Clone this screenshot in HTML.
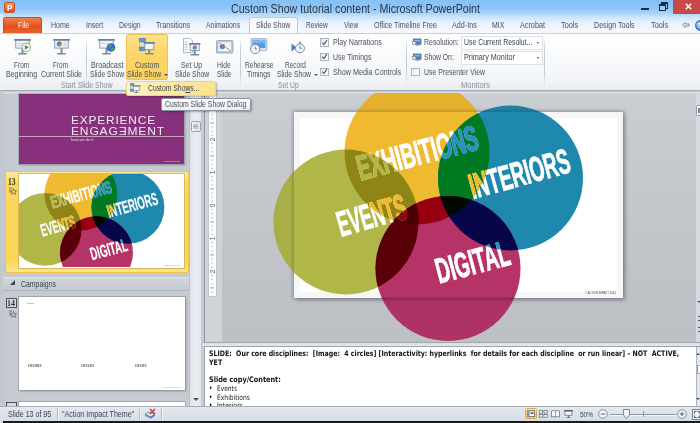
<!DOCTYPE html>
<html><head><meta charset="utf-8">
<style>
*{box-sizing:border-box;margin:0;padding:0}
html,body{width:700px;height:423px;overflow:hidden;background:#fff}
body{font-family:"Liberation Sans",sans-serif;position:relative}
#root{position:absolute;left:0;top:0;width:700px;height:423px;overflow:hidden;will-change:transform}
.a{position:absolute}
.t{position:absolute;white-space:pre;transform-origin:0 50%}
</style></head><body><div id="root">
<div class="a" style="left:0px;top:0px;width:700px;height:33px;background:linear-gradient(#84c1f7 0,#8dc6f8 8px,#a9d3f9 13px,#d3e7fb 18px,#e9f2fc 23px,#f3f7fd 30px,#f6f9fd 33px)"></div>
<div class="a" style="left:0px;top:33px;width:4.5px;height:390px;background:#e3e7ec"></div>
<div class="a" style="left:0px;top:14px;width:3px;height:20px;background:linear-gradient(#dbe9fa,#f2f6fc)"></div>
<div class="a" style="left:4px;top:2px;width:11px;height:11px;background:linear-gradient(#f59a5a,#d9531e);border-radius:2px;border:1px solid #c9501e"></div>
<div class="t" style="left:6.5px;top:2.9px;line-height:11px;font-size:9px;color:#fff;transform:scaleX(0.916);font-weight:bold;">P</div>
<div class="t" style="left:231.0px;top:0.9px;line-height:16px;font-size:12.6px;color:#2a3646;transform:scaleX(0.845);">Custom Show tutorial content - Microsoft PowerPoint</div>
<div class="a" style="left:641px;top:8px;width:8px;height:1.8px;background:#1f2c3a"></div>
<div class="a" style="left:661.3px;top:1.8px;width:7px;height:7px;border:1.3px solid #1f2c3a;border-top-width:2.2px"></div>
<div class="a" style="left:659.3px;top:3.8px;width:7px;height:7px;border:1.3px solid #1f2c3a;border-top-width:2.2px;background:#9ccaf7"></div>
<div class="a" style="left:673px;top:0px;width:27px;height:13.6px;background:#c9484a"></div>
<svg class="a" style="left:685px;top:3px" width="7" height="7" viewBox="0 0 7 7"><path d="M0.8 0.8L6.2 6.2M6.2 0.8L0.8 6.2" stroke="#fff" stroke-width="1.5"/></svg>
<svg class="a" style="left:681.5px;top:22px" width="8" height="6" viewBox="0 0 8 6"><path d="M3 0.6L0.6 3L3 5.4V4H7V2H3Z" fill="#f4f6f9" stroke="#5b6676" stroke-width="0.7"/></svg>
<div class="a" style="left:694.5px;top:19.5px;width:11px;height:11px;border-radius:50%;background:radial-gradient(circle at 35% 30%,#8fc0f5,#2f6fd0);border:1px solid #2a5fb5"></div>
<div class="t" style="left:697.3px;top:20.8px;line-height:10px;font-size:8px;color:#fff;transform:scaleX(0.757);font-weight:bold;">?</div>
<div class="a" style="left:3px;top:17px;width:39px;height:16px;background:linear-gradient(#f0834a,#e5501c 55%,#e9602a);border-radius:3px 3px 0 0;border:1px solid #cf4a1c;border-bottom:none"></div>
<div class="t" style="left:17.5px;top:21.3px;line-height:10px;font-size:8.2px;color:#fff;transform:scaleX(0.832);">File</div>
<div class="a" style="left:249px;top:17px;width:49px;height:17px;background:linear-gradient(#f4f8fd,#fafcfe);border:1px solid #b9c9dc;border-bottom:none;border-radius:3px 3px 0 0"></div>
<div class="t" style="left:51.3px;top:21.1px;line-height:10px;font-size:8.2px;color:#475060;transform:scaleX(0.855);">Home</div>
<div class="t" style="left:85.8px;top:21.1px;line-height:10px;font-size:8.2px;color:#475060;transform:scaleX(0.839);">Insert</div>
<div class="t" style="left:118.8px;top:21.1px;line-height:10px;font-size:8.2px;color:#475060;transform:scaleX(0.850);">Design</div>
<div class="t" style="left:155.8px;top:21.1px;line-height:10px;font-size:8.2px;color:#475060;transform:scaleX(0.859);">Transitions</div>
<div class="t" style="left:206.3px;top:21.1px;line-height:10px;font-size:8.2px;color:#475060;transform:scaleX(0.843);">Animations</div>
<div class="t" style="left:256.3px;top:21.1px;line-height:10px;font-size:8.2px;color:#475060;transform:scaleX(0.834);">Slide Show</div>
<div class="t" style="left:306.3px;top:21.1px;line-height:10px;font-size:8.2px;color:#475060;transform:scaleX(0.807);">Review</div>
<div class="t" style="left:343.8px;top:21.1px;line-height:10px;font-size:8.2px;color:#475060;transform:scaleX(0.806);">View</div>
<div class="t" style="left:373.8px;top:21.1px;line-height:10px;font-size:8.2px;color:#475060;transform:scaleX(0.860);">Office Timeline Free</div>
<div class="t" style="left:452.0px;top:21.1px;line-height:10px;font-size:8.2px;color:#475060;transform:scaleX(0.878);">Add-Ins</div>
<div class="t" style="left:492.0px;top:21.1px;line-height:10px;font-size:8.2px;color:#475060;transform:scaleX(0.857);">MIX</div>
<div class="t" style="left:520.0px;top:21.1px;line-height:10px;font-size:8.2px;color:#475060;transform:scaleX(0.885);">Acrobat</div>
<div class="t" style="left:560.8px;top:21.1px;line-height:10px;font-size:8.2px;color:#475060;transform:scaleX(0.898);">Tools</div>
<div class="t" style="left:593.8px;top:21.1px;line-height:10px;font-size:8.2px;color:#475060;transform:scaleX(0.870);">Design Tools</div>
<div class="t" style="left:650.8px;top:21.1px;line-height:10px;font-size:8.2px;color:#475060;transform:scaleX(0.898);">Tools</div>
<div class="a" style="left:0px;top:33px;width:700px;height:58px;background:linear-gradient(#ffffff,#f8f9fb 50%,#f1f3f6 85%,#eaedf1);border-top:1px solid #c5d0de;border-bottom:1px solid #a7acb4"></div>
<div class="a" style="left:85.5px;top:37px;width:1px;height:50px;background:linear-gradient(rgba(190,200,212,0),#c3ccd8 30%,#c3ccd8 70%,rgba(190,200,212,0))"></div>
<div class="a" style="left:239.5px;top:37px;width:1px;height:50px;background:linear-gradient(rgba(190,200,212,0),#c3ccd8 30%,#c3ccd8 70%,rgba(190,200,212,0))"></div>
<div class="a" style="left:406px;top:37px;width:1px;height:50px;background:linear-gradient(rgba(190,200,212,0),#c3ccd8 30%,#c3ccd8 70%,rgba(190,200,212,0))"></div>
<div class="a" style="left:543.5px;top:37px;width:1px;height:50px;background:linear-gradient(rgba(190,200,212,0),#c3ccd8 30%,#c3ccd8 70%,rgba(190,200,212,0))"></div>
<div class="a" style="left:126px;top:34px;width:42px;height:46px;background:linear-gradient(#fce08a,#fbd668 45%,#fad25e);border:1px solid #eec257;border-radius:2px"></div>
<div class="t" style="left:14.3px;top:60.8px;line-height:10px;font-size:8.2px;color:#4a505c;transform:scaleX(0.794);">From</div>
<div class="t" style="left:6.3px;top:70.3px;line-height:10px;font-size:8.2px;color:#4a505c;transform:scaleX(0.855);">Beginning</div>
<div class="t" style="left:53.0px;top:60.8px;line-height:10px;font-size:8.2px;color:#4a505c;transform:scaleX(0.784);">From</div>
<div class="t" style="left:41.0px;top:70.3px;line-height:10px;font-size:8.2px;color:#4a505c;transform:scaleX(0.857);">Current Slide</div>
<div class="t" style="left:90.5px;top:60.8px;line-height:10px;font-size:8.2px;color:#4a505c;transform:scaleX(0.880);">Broadcast</div>
<div class="t" style="left:89.5px;top:70.3px;line-height:10px;font-size:8.2px;color:#4a505c;transform:scaleX(0.836);">Slide Show</div>
<div class="t" style="left:134.5px;top:60.8px;line-height:10px;font-size:8.2px;color:#4a505c;transform:scaleX(0.860);">Custom</div>
<div class="t" style="left:127.0px;top:70.3px;line-height:10px;font-size:8.2px;color:#4a505c;transform:scaleX(0.836);">Slide Show</div>
<div class="a" style="left:163.5px;top:74px;border:2px solid transparent;border-top:2.5px solid #4a5260;width:0;height:0"></div>
<div class="t" style="left:181.0px;top:60.8px;line-height:10px;font-size:8.2px;color:#4a505c;transform:scaleX(0.838);">Set Up</div>
<div class="t" style="left:174.5px;top:70.3px;line-height:10px;font-size:8.2px;color:#4a505c;transform:scaleX(0.836);">Slide Show</div>
<div class="t" style="left:217.0px;top:60.8px;line-height:10px;font-size:8.2px;color:#4a505c;transform:scaleX(0.818);">Hide</div>
<div class="t" style="left:216.5px;top:70.3px;line-height:10px;font-size:8.2px;color:#4a505c;transform:scaleX(0.795);">Slide</div>
<div class="t" style="left:244.5px;top:60.8px;line-height:10px;font-size:8.2px;color:#4a505c;transform:scaleX(0.802);">Rehearse</div>
<div class="t" style="left:247.0px;top:70.3px;line-height:10px;font-size:8.2px;color:#4a505c;transform:scaleX(0.827);">Timings</div>
<div class="t" style="left:285.0px;top:60.8px;line-height:10px;font-size:8.2px;color:#4a505c;transform:scaleX(0.794);">Record</div>
<div class="t" style="left:277.0px;top:70.3px;line-height:10px;font-size:8.2px;color:#4a505c;transform:scaleX(0.829);">Slide Show</div>
<div class="a" style="left:313.5px;top:74px;border:2px solid transparent;border-top:2.5px solid #4a5260;width:0;height:0"></div>
<svg class="a" style="left:13.7px;top:39.2px" width="18" height="17" viewBox="0 0 18 17"><rect x="0" y="0" width="17" height="1.8" rx="0.6" fill="#6f7f93"/><rect x="1.75" y="1.6" width="13.5" height="7.5" fill="#f2f5f9" stroke="#8393a8" stroke-width="0.9"/><rect x="7.5" y="9.1" width="2" height="5" fill="#7c8a9c"/><rect x="4.0" y="13.9" width="9" height="1.6" rx="0.7" fill="#7c8a9c"/><line x1="3.5" y1="4.5" x2="10" y2="4.5" stroke="#b8c2cf" stroke-width="0.7"/><line x1="3.5" y1="6.5" x2="9" y2="6.5" stroke="#b8c2cf" stroke-width="0.7"/><circle cx="12.3" cy="8.3" r="4.1" fill="#f4f8f2" stroke="#8a968a" stroke-width="0.8"/><path d="M10.9 5.9L15 8.3L10.9 10.7Z" fill="#3ea33a"/></svg>
<svg class="a" style="left:52.5px;top:39.2px" width="18" height="17" viewBox="0 0 18 17"><rect x="0" y="0" width="17" height="1.8" rx="0.6" fill="#6f7f93"/><rect x="1.75" y="1.6" width="13.5" height="7.5" fill="#f2f5f9" stroke="#8393a8" stroke-width="0.9"/><rect x="7.5" y="9.1" width="2" height="5" fill="#7c8a9c"/><rect x="4.0" y="13.9" width="9" height="1.6" rx="0.7" fill="#7c8a9c"/><circle cx="6.2" cy="5" r="2.5" fill="#4d86d0"/><path d="M6.2 5L6.2 2.5A2.5 2.5 0 0 1 8.7 5Z" fill="#d9534a"/><path d="M6.2 5L8.7 5A2.5 2.5 0 0 1 6.2 7.5Z" fill="#7fb548"/><line x1="10.3" y1="3.8" x2="13.3" y2="3.8" stroke="#b8c2cf" stroke-width="0.7"/><line x1="10.3" y1="5.4" x2="13.3" y2="5.4" stroke="#b8c2cf" stroke-width="0.7"/><line x1="10.3" y1="7" x2="13.3" y2="7" stroke="#b8c2cf" stroke-width="0.7"/></svg>
<svg class="a" style="left:98.3px;top:39.2px" width="19" height="17" viewBox="0 0 19 17"><rect x="0" y="0" width="17" height="1.8" rx="0.6" fill="#6f7f93"/><rect x="1.75" y="1.6" width="13.5" height="7.5" fill="#f2f5f9" stroke="#8393a8" stroke-width="0.9"/><rect x="7.5" y="9.1" width="2" height="5" fill="#7c8a9c"/><rect x="4.0" y="13.9" width="9" height="1.6" rx="0.7" fill="#7c8a9c"/><line x1="3.5" y1="4.5" x2="10" y2="4.5" stroke="#b8c2cf" stroke-width="0.7"/><circle cx="13" cy="8.4" r="4" fill="#2f6fc4" stroke="#2a5da6" stroke-width="0.5"/><path d="M10.5 6.5Q12 5 13.5 5.6Q14 7 12.6 7.6Q12 9 11 8.5Z" fill="#4fae3e"/><path d="M13.5 9Q15 8.3 16 9.5Q15.4 11.6 13.8 11.8Q13 10.5 13.5 9Z" fill="#4fae3e"/></svg>
<svg class="a" style="left:138.5px;top:38.3px" width="17" height="17" viewBox="0 0 17 17"><rect x="0.3" y="0.3" width="6" height="3.3" fill="#5d9be0" stroke="#3c73b8" stroke-width="0.6"/><rect x="0.3" y="4.8" width="6" height="3.3" fill="#dfe9f6" stroke="#8aa4c8" stroke-width="0.6"/><rect x="0.3" y="9.3" width="6" height="3.3" fill="#5d9be0" stroke="#3c73b8" stroke-width="0.6"/><g transform="translate(4.5,4)"><rect x="0" y="0" width="11.5" height="1.8" rx="0.6" fill="#6f7f93"/><rect x="1.25" y="1.6" width="9" height="6" fill="#f2f5f9" stroke="#8393a8" stroke-width="0.9"/><rect x="4.75" y="7.6" width="2" height="3.5" fill="#7c8a9c"/><rect x="1.25" y="10.9" width="9" height="1.6" rx="0.7" fill="#7c8a9c"/></g></svg>
<svg class="a" style="left:183px;top:38px" width="18" height="17.5" viewBox="0 0 18 17.5"><path d="M0.5 0.5H7L9.5 3V14.5H0.5Z" fill="#fbfcfe" stroke="#9aa6b6" stroke-width="0.8"/><g stroke="#8b98ab" stroke-width="0.7"><line x1="2" y1="4" x2="4.5" y2="4"/><line x1="2" y1="6.5" x2="4.5" y2="6.5"/><line x1="2" y1="9" x2="4.5" y2="9"/><line x1="2" y1="11.5" x2="4.5" y2="11.5"/></g><g transform="translate(6,5)"><rect x="0" y="0" width="11.5" height="1.8" rx="0.6" fill="#6f7f93"/><rect x="1.25" y="1.6" width="9" height="6" fill="#f2f5f9" stroke="#8393a8" stroke-width="0.9"/><rect x="4.75" y="7.6" width="2" height="3.5" fill="#7c8a9c"/><rect x="1.25" y="10.9" width="9" height="1.6" rx="0.7" fill="#7c8a9c"/><circle cx="5.8" cy="4.6" r="2.1" fill="#4d86d0"/><path d="M5.8 4.6V2.5A2.1 2.1 0 0 1 7.9 4.6Z" fill="#d9534a"/><path d="M5.8 4.6H7.9A2.1 2.1 0 0 1 5.8 6.7Z" fill="#7fb548"/></g></svg>
<svg class="a" style="left:215.5px;top:40px" width="18" height="14" viewBox="0 0 18 14"><rect x="0.5" y="0.5" width="16.5" height="12.5" rx="1" fill="#c9d0da" stroke="#8f9aaa" stroke-width="0.8"/><rect x="2" y="2" width="13.5" height="9.5" fill="#f1f4f8" stroke="#a7b1bf" stroke-width="0.5"/><circle cx="6.3" cy="6.5" r="2.6" fill="#4d86d0"/><path d="M6.3 6.5V3.9A2.6 2.6 0 0 1 8.9 6.5Z" fill="#d9534a"/><path d="M2.5 2.5L15 11" stroke="#8893a3" stroke-width="0.9"/></svg>
<svg class="a" style="left:250px;top:38.3px" width="18" height="17" viewBox="0 0 18 17"><rect x="1" y="0.4" width="15.8" height="12.3" rx="1" fill="#dfe6ef" stroke="#98a5b6" stroke-width="0.8"/><rect x="2.4" y="1.8" width="13" height="8.3" fill="#4f9be6"/><rect x="2.4" y="1.8" width="13" height="3.5" fill="#78b6f0"/><circle cx="5.2" cy="11" r="4.6" fill="#f6f8fa" stroke="#7f8b9b" stroke-width="1"/><rect x="4.4" y="4.9" width="1.6" height="1.6" fill="#7f8b9b"/><path d="M5.2 8.5V11H7.3" stroke="#5d6878" stroke-width="0.8" fill="none"/></svg>
<svg class="a" style="left:290.5px;top:40.5px" width="15" height="14" viewBox="0 0 15 14"><path d="M0.5 2.5L5.5 6.5L0.5 10.5Z" fill="#3f7fd6"/><circle cx="8.9" cy="7.3" r="4.5" fill="#f6f8fa" stroke="#7f8b9b" stroke-width="1"/><rect x="8" y="0.6" width="1.8" height="2" fill="#7f8b9b"/><path d="M8.9 4.8V7.3H11" stroke="#5d6878" stroke-width="0.8" fill="none"/></svg>
<div class="t" style="left:61.0px;top:81.3px;line-height:10px;font-size:8.2px;color:#868d99;transform:scaleX(0.850);">Start Slide Show</div>
<div class="t" style="left:278.0px;top:81.3px;line-height:10px;font-size:8.2px;color:#868d99;transform:scaleX(0.830);">Set Up</div>
<div class="t" style="left:461.0px;top:81.3px;line-height:10px;font-size:8.2px;color:#868d99;transform:scaleX(0.922);">Monitors</div>
<div class="a" style="left:320px;top:38.2px;width:8.6px;height:8.6px;background:linear-gradient(135deg,#dfe4ea,#fbfcfd 60%);border:1px solid #adb5c0"></div>
<svg class="a" style="left:321px;top:38.9px" width="7" height="7" viewBox="0 0 7 7"><path d="M1.2 3.6L2.9 5.6L5.9 1.2" stroke="#525c6a" stroke-width="1.2" fill="none"/></svg>
<div class="a" style="left:320px;top:52.7px;width:8.6px;height:8.6px;background:linear-gradient(135deg,#dfe4ea,#fbfcfd 60%);border:1px solid #adb5c0"></div>
<svg class="a" style="left:321px;top:53.4px" width="7" height="7" viewBox="0 0 7 7"><path d="M1.2 3.6L2.9 5.6L5.9 1.2" stroke="#525c6a" stroke-width="1.2" fill="none"/></svg>
<div class="a" style="left:320px;top:67.7px;width:8.6px;height:8.6px;background:linear-gradient(135deg,#dfe4ea,#fbfcfd 60%);border:1px solid #adb5c0"></div>
<svg class="a" style="left:321px;top:68.4px" width="7" height="7" viewBox="0 0 7 7"><path d="M1.2 3.6L2.9 5.6L5.9 1.2" stroke="#525c6a" stroke-width="1.2" fill="none"/></svg>
<div class="a" style="left:411px;top:67.7px;width:8.6px;height:8.6px;background:linear-gradient(135deg,#dfe4ea,#fbfcfd 60%);border:1px solid #adb5c0"></div>
<div class="t" style="left:332.5px;top:38.3px;line-height:10px;font-size:8.2px;color:#4a505c;transform:scaleX(0.871);">Play Narrations</div>
<div class="t" style="left:332.5px;top:52.8px;line-height:10px;font-size:8.2px;color:#4a505c;transform:scaleX(0.853);">Use Timings</div>
<div class="t" style="left:332.5px;top:67.8px;line-height:10px;font-size:8.2px;color:#4a505c;transform:scaleX(0.876);">Show Media Controls</div>
<div class="t" style="left:424.0px;top:38.3px;line-height:10px;font-size:8.2px;color:#4a505c;transform:scaleX(0.848);">Resolution:</div>
<div class="t" style="left:424.0px;top:52.8px;line-height:10px;font-size:8.2px;color:#4a505c;transform:scaleX(0.828);">Show On:</div>
<div class="t" style="left:423.8px;top:67.8px;line-height:10px;font-size:8.2px;color:#4a505c;transform:scaleX(0.846);">Use Presenter View</div>
<div class="a" style="left:461px;top:35.5px;width:81.5px;height:14px;background:#fff;border:1px solid #dde2e9"></div>
<div class="t" style="left:464.0px;top:38.3px;line-height:10px;font-size:8.2px;color:#3a4150;transform:scaleX(0.844);">Use Current Resolut...</div>
<div class="a" style="left:536.8px;top:41.8px;border:1.7px solid transparent;border-top:2.2px solid #4a5260;width:0;height:0"></div>
<div class="a" style="left:461px;top:50.5px;width:81.5px;height:14px;background:#fff;border:1px solid #dde2e9"></div>
<div class="t" style="left:464.0px;top:53.3px;line-height:10px;font-size:8.2px;color:#3a4150;transform:scaleX(0.881);">Primary Monitor</div>
<div class="a" style="left:536.8px;top:56.8px;border:1.7px solid transparent;border-top:2.2px solid #4a5260;width:0;height:0"></div>
<svg class="a" style="left:411.5px;top:38.3px" width="10" height="9" viewBox="0 0 10 9"><rect x="1.5" y="1" width="7.5" height="5.2" fill="#4d82c8" stroke="#56657a" stroke-width="0.8"/><rect x="2.3" y="1.8" width="6" height="1.6" fill="#86b2e6"/><rect x="0.3" y="3.6" width="3.4" height="3" fill="#e8edf4" stroke="#6b788a" stroke-width="0.5"/><rect x="3.5" y="6.8" width="4" height="0.9" fill="#8a94a2"/></svg>
<svg class="a" style="left:411.5px;top:52.8px" width="10" height="9" viewBox="0 0 10 9"><rect x="1.5" y="1" width="7.5" height="5.2" fill="#4d82c8" stroke="#56657a" stroke-width="0.8"/><rect x="2.3" y="1.8" width="6" height="1.6" fill="#86b2e6"/><rect x="0.3" y="3.6" width="3.4" height="3" fill="#e8edf4" stroke="#6b788a" stroke-width="0.5"/><rect x="3.5" y="6.8" width="4" height="0.9" fill="#8a94a2"/></svg>
<div class="a" style="left:0px;top:91px;width:700px;height:315px;background:#c3c8ce"></div>
<div class="a" style="left:4.5px;top:92px;width:185px;height:314px;background:#c6cbd2"></div>
<div class="a" style="left:3px;top:92px;width:200px;height:2px;background:linear-gradient(#dfe4ea,#c9cfd6)"></div>
<div class="a" style="left:19px;top:93.5px;width:165px;height:70.5px;background:#87307b;box-shadow:0 0 0 1px rgba(160,165,172,.8),1px 1px 2px rgba(60,60,70,.5)"></div>
<div class="a" style="left:19px;top:135.5px;width:165px;height:1px;background:#c9a3c4"></div>
<div class="t" style="left:70.6px;top:112.8px;line-height:14px;font-size:11.5px;color:#f3e6f1;transform:scaleX(1.034);letter-spacing:0.8px;">EXPERIENCE</div>
<div class="t" style="left:70.6px;top:123.8px;line-height:14px;font-size:11.5px;color:#f3e6f1;transform:scaleX(1.046);letter-spacing:0.8px;">ENGAGƎMENT</div>
<div class="t" style="left:70.6px;top:137.9px;line-height:4px;font-size:3.6px;color:#e9d6e6;transform:scaleX(1.119);">how we do it</div>
<div class="t" style="left:163.0px;top:159.7px;line-height:2px;font-size:2px;color:#e9d6e6;transform:scaleX(1.095);">ACTION IMPACT</div>
<div class="a" style="left:4.5px;top:170.5px;width:184.5px;height:102.5px;background:linear-gradient(#fdeaa0,#fbd95f 12%,#fad557 88%,#fce38a);border:1px solid #eec24a;border-radius:2px"></div>
<div class="a" style="left:18.5px;top:174px;width:165.5px;height:93.5px;background:#fff;box-shadow:0 0 0 1px rgba(200,170,80,.7)"></div>
<svg class="a" style="left:18.5px;top:174px;overflow:hidden" width="165.5" height="93.1" viewBox="0 0 329 185"><defs><clipPath id="cY"><circle cx="123" cy="40" r="72.5"/></clipPath><clipPath id="cO"><circle cx="52" cy="110" r="72.5"/></clipPath><clipPath id="cB"><circle cx="216.5" cy="66" r="72.5"/></clipPath><clipPath id="cM"><circle cx="154" cy="156.5" r="72.5"/></clipPath></defs><circle cx="52" cy="110" r="72.5" fill="#b1b649"/><circle cx="123" cy="40" r="72.5" fill="#f0ba30"/><circle cx="216.5" cy="66" r="72.5" fill="#1e88ad"/><circle cx="154" cy="156.5" r="72.5" fill="#b63367"/><circle cx="52" cy="110" r="72.5" fill="#8f8416" clip-path="url(#cY)"/><circle cx="216.5" cy="66" r="72.5" fill="#007a22" clip-path="url(#cY)"/><circle cx="154" cy="156.5" r="72.5" fill="#960010" clip-path="url(#cY)"/><circle cx="154" cy="156.5" r="72.5" fill="#5a0008" clip-path="url(#cO)"/><circle cx="154" cy="156.5" r="72.5" fill="#08064a" clip-path="url(#cB)"/><g clip-path="url(#cO)"><circle cx="154" cy="156.5" r="72.5" fill="#4a0004" clip-path="url(#cY)"/></g><g clip-path="url(#cB)"><circle cx="154" cy="156.5" r="72.5" fill="#000800" clip-path="url(#cY)"/></g><g font-size="33.5" font-weight="bold" font-family="'Liberation Sans',sans-serif"><text font-size="35" transform="translate(66.5,68.5) rotate(-14.85)" textLength="124" lengthAdjust="spacingAndGlyphs" fill="#fff" stroke="#fff" stroke-width="0.2" vector-effect="non-scaling-stroke">EXHIBITIONS</text><g clip-path="url(#cO)"><text font-size="35" transform="translate(66.5,68.5) rotate(-14.85)" textLength="124" lengthAdjust="spacingAndGlyphs" fill="#b1b649" stroke="#b1b649" stroke-width="0.5" vector-effect="non-scaling-stroke">EXHIBITIONS</text></g><g clip-path="url(#cB)"><text font-size="35" transform="translate(66.5,68.5) rotate(-14.85)" textLength="124" lengthAdjust="spacingAndGlyphs" fill="#2a90c0" stroke="#2a90c0" stroke-width="0.5" vector-effect="non-scaling-stroke">EXHIBITIONS</text></g><text font-size="35" transform="translate(179,87) rotate(-15.4)" textLength="103" lengthAdjust="spacingAndGlyphs" fill="#fff" stroke="#fff" stroke-width="0.2" vector-effect="non-scaling-stroke">INTERIORS</text><g clip-path="url(#cY)"><text font-size="35" transform="translate(179,87) rotate(-15.4)" textLength="103" lengthAdjust="spacingAndGlyphs" fill="#f0ba30" stroke="#f0ba30" stroke-width="0.5" vector-effect="non-scaling-stroke">INTERIORS</text></g><text font-size="35.5" transform="translate(46.9,124.7) rotate(-15.8)" textLength="70.5" lengthAdjust="spacingAndGlyphs" fill="#fff" stroke="#fff" stroke-width="0.2" vector-effect="non-scaling-stroke">EVENTS</text><g clip-path="url(#cY)"><text font-size="35.5" transform="translate(46.9,124.7) rotate(-15.8)" textLength="70.5" lengthAdjust="spacingAndGlyphs" fill="#f0ba30" stroke="#f0ba30" stroke-width="0.5" vector-effect="non-scaling-stroke">EVENTS</text></g><g clip-path="url(#cM)"><text font-size="35.5" transform="translate(46.9,124.7) rotate(-15.8)" textLength="70.5" lengthAdjust="spacingAndGlyphs" fill="#b63367" stroke="#b63367" stroke-width="0.5" vector-effect="non-scaling-stroke">EVENTS</text></g><g clip-path="url(#cM)"><g clip-path="url(#cY)"><text font-size="35.5" transform="translate(46.9,124.7) rotate(-15.8)" textLength="70.5" lengthAdjust="spacingAndGlyphs" fill="#960010" stroke="#960010" stroke-width="0.5" vector-effect="non-scaling-stroke">EVENTS</text></g></g><text font-size="35.5" transform="translate(145.3,171.6) rotate(-14.9)" textLength="75.2" lengthAdjust="spacingAndGlyphs" fill="#fff" stroke="#fff" stroke-width="0.2" vector-effect="non-scaling-stroke">DIGITAL</text><g clip-path="url(#cB)"><text font-size="35.5" transform="translate(145.3,171.6) rotate(-14.9)" textLength="75.2" lengthAdjust="spacingAndGlyphs" fill="#2a90c0" stroke="#2a90c0" stroke-width="0.5" vector-effect="non-scaling-stroke">DIGITAL</text></g></g></svg>
<div class="t" style="left:7.6px;top:175.6px;line-height:12px;font-size:9.5px;color:#3a3222;transform:scaleX(0.800);font-weight:bold;font-family:'Liberation Serif',serif;">13</div>
<svg class="a" style="left:7.5px;top:187px" width="9" height="8" viewBox="0 0 9 8"><path d="M1 1H4M1 3H3M1 5H3" stroke="#5a5340" stroke-width="0.7"/><path d="M5.5 1.5L6.3 3.6L8.5 3.8L6.9 5.2L7.4 7.4L5.5 6.2L3.6 7.4L4.1 5.2L2.8 3.8L4.7 3.6Z" fill="none" stroke="#5a5340" stroke-width="0.7"/></svg>
<div class="t" style="left:163.0px;top:263.7px;line-height:2px;font-size:2px;color:#888;transform:scaleX(1.095);">ACTION IMPACT</div>
<div class="a" style="left:3px;top:276.5px;width:186px;height:14px;background:linear-gradient(#d2d7dd,#c4cad1);border-top:1px solid #dde1e6;border-bottom:1px solid #aeb5be"></div>
<div class="a" style="left:10px;top:280px;width:0;height:0;border-left:5.5px solid transparent;border-bottom:5.5px solid #3f4651"></div>
<div class="t" style="left:21.0px;top:279.5px;line-height:10px;font-size:8.2px;color:#3b4452;transform:scaleX(0.844);">Campaigns</div>
<div class="a" style="left:18.5px;top:296.5px;width:166px;height:93.5px;background:#fff;box-shadow:0 0 0 1px rgba(150,156,165,.8),1px 1px 2px rgba(60,60,70,.5)"></div>
<div class="a" style="left:5.5px;top:298px;width:11px;height:9.5px;border:1px solid #4a4f58;background:#d6dae0"></div>
<div class="t" style="left:7.0px;top:298.2px;line-height:11px;font-size:8.5px;color:#2d3038;transform:scaleX(0.941);font-weight:bold;font-family:'Liberation Serif',serif;">14</div>
<svg class="a" style="left:7.5px;top:309.5px" width="9" height="8" viewBox="0 0 9 8"><path d="M1 1H4M1 3H3M1 5H3" stroke="#4f5560" stroke-width="0.7"/><path d="M5.5 1.5L6.3 3.6L8.5 3.8L6.9 5.2L7.4 7.4L5.5 6.2L3.6 7.4L4.1 5.2L2.8 3.8L4.7 3.6Z" fill="none" stroke="#4f5560" stroke-width="0.7"/></svg>
<div class="a" style="left:27px;top:303px;width:7px;height:1px;background:#c9cf7a"></div>
<div class="a" style="left:27.6px;top:363.8px;width:14.4px;height:3.3px;background:repeating-linear-gradient(90deg,#a3a3a3 0 1px,#dcdcdc 1px 1.7px)"></div>
<div class="a" style="left:81px;top:363.8px;width:13px;height:3.3px;background:repeating-linear-gradient(90deg,#a3a3a3 0 1px,#dcdcdc 1px 1.7px)"></div>
<div class="a" style="left:135px;top:363.8px;width:12px;height:3.3px;background:repeating-linear-gradient(90deg,#a3a3a3 0 1px,#dcdcdc 1px 1.7px)"></div>
<div class="t" style="left:163.0px;top:386.2px;line-height:2px;font-size:2px;color:#999;transform:scaleX(1.095);">ACTION IMPACT</div>
<div class="a" style="left:18.5px;top:401.5px;width:166px;height:6px;background:#fff;box-shadow:0 0 0 1px rgba(150,156,165,.8)"></div>
<div class="a" style="left:5.5px;top:402px;width:11px;height:6px;border:1px solid #4a4f58;background:#d6dae0"></div>
<div class="a" style="left:189px;top:92px;width:12px;height:314px;background:linear-gradient(90deg,#dfe3e8,#eaedf1 50%,#e3e6eb);border-left:1px solid #bcc2ca"></div>
<div class="a" style="left:190.5px;top:120.5px;width:10px;height:11px;background:linear-gradient(90deg,#f4f6f8,#dfe3e8);border:1px solid #9aa3ae;border-radius:1.5px"></div>
<svg class="a" style="left:193px;top:123.5px" width="5" height="5" viewBox="0 0 5 5"><path d="M0 1H5M0 2.5H5M0 4H5" stroke="#8d96a2" stroke-width="0.8"/></svg>
<div class="a" style="left:192.5px;top:398px;width:0;height:0;border:3px solid transparent;border-top:3.5px solid #4a5260"></div>
<div class="a" style="left:201px;top:92px;width:3.5px;height:314px;background:#c8ccd2;border-right:1px solid #8f97a2"></div>
<div class="a" style="left:204.5px;top:93px;width:495.5px;height:250px;background:linear-gradient(#cacdd2,#c3c7cc 45%,#bcc0c5)"></div>
<div class="a" style="left:205px;top:91.5px;width:495px;height:2px;background:linear-gradient(#e1e5ea,#cdd2d9)"></div>
<div class="a" style="left:204.5px;top:93px;width:17px;height:249px;background:#d0d4d9"></div>
<div class="a" style="left:207.5px;top:93px;width:9.5px;height:204px;background:#fbfcfd;border:1px solid #bfc5cd;border-top:none"></div>
<div class="a" style="left:208px;top:134.5px;width:8px;height:9px;font-size:6.5px;line-height:9px;text-align:center;color:#4a5260;transform:rotate(-90deg)">2</div>
<div class="a" style="left:208px;top:167.5px;width:8px;height:9px;font-size:6.5px;line-height:9px;text-align:center;color:#4a5260;transform:rotate(-90deg)">1</div>
<div class="a" style="left:208px;top:200.9px;width:8px;height:9px;font-size:6.5px;line-height:9px;text-align:center;color:#4a5260;transform:rotate(-90deg)">0</div>
<div class="a" style="left:208px;top:233.5px;width:8px;height:9px;font-size:6.5px;line-height:9px;text-align:center;color:#4a5260;transform:rotate(-90deg)">1</div>
<div class="a" style="left:208px;top:266.8px;width:8px;height:9px;font-size:6.5px;line-height:9px;text-align:center;color:#4a5260;transform:rotate(-90deg)">2</div>
<svg class="a" style="left:207px;top:0px" width="10" height="300" viewBox="0 0 10 300"><line x1="3" y1="106.4" x2="7" y2="106.4" stroke="#6c7684" stroke-width="0.7"/><rect x="4.6" y="110.1" width="0.9" height="0.9" fill="#6c7684"/><rect x="4.6" y="114.2" width="0.9" height="0.9" fill="#6c7684"/><rect x="4.6" y="118.4" width="0.9" height="0.9" fill="#6c7684"/><line x1="3" y1="122.9" x2="7" y2="122.9" stroke="#6c7684" stroke-width="0.7"/><rect x="4.6" y="126.6" width="0.9" height="0.9" fill="#6c7684"/><rect x="4.6" y="130.8" width="0.9" height="0.9" fill="#6c7684"/><rect x="4.6" y="134.9" width="0.9" height="0.9" fill="#6c7684"/><rect x="4.6" y="143.1" width="0.9" height="0.9" fill="#6c7684"/><rect x="4.6" y="147.2" width="0.9" height="0.9" fill="#6c7684"/><rect x="4.6" y="151.4" width="0.9" height="0.9" fill="#6c7684"/><line x1="3" y1="155.9" x2="7" y2="155.9" stroke="#6c7684" stroke-width="0.7"/><rect x="4.6" y="159.6" width="0.9" height="0.9" fill="#6c7684"/><rect x="4.6" y="163.8" width="0.9" height="0.9" fill="#6c7684"/><rect x="4.6" y="167.9" width="0.9" height="0.9" fill="#6c7684"/><rect x="4.6" y="176.1" width="0.9" height="0.9" fill="#6c7684"/><rect x="4.6" y="180.2" width="0.9" height="0.9" fill="#6c7684"/><rect x="4.6" y="184.4" width="0.9" height="0.9" fill="#6c7684"/><line x1="3" y1="188.9" x2="7" y2="188.9" stroke="#6c7684" stroke-width="0.7"/><rect x="4.6" y="192.6" width="0.9" height="0.9" fill="#6c7684"/><rect x="4.6" y="196.8" width="0.9" height="0.9" fill="#6c7684"/><rect x="4.6" y="200.9" width="0.9" height="0.9" fill="#6c7684"/><rect x="4.6" y="209.1" width="0.9" height="0.9" fill="#6c7684"/><rect x="4.6" y="213.2" width="0.9" height="0.9" fill="#6c7684"/><rect x="4.6" y="217.4" width="0.9" height="0.9" fill="#6c7684"/><line x1="3" y1="221.9" x2="7" y2="221.9" stroke="#6c7684" stroke-width="0.7"/><rect x="4.6" y="225.6" width="0.9" height="0.9" fill="#6c7684"/><rect x="4.6" y="229.8" width="0.9" height="0.9" fill="#6c7684"/><rect x="4.6" y="233.9" width="0.9" height="0.9" fill="#6c7684"/><rect x="4.6" y="242.1" width="0.9" height="0.9" fill="#6c7684"/><rect x="4.6" y="246.2" width="0.9" height="0.9" fill="#6c7684"/><rect x="4.6" y="250.4" width="0.9" height="0.9" fill="#6c7684"/><line x1="3" y1="254.9" x2="7" y2="254.9" stroke="#6c7684" stroke-width="0.7"/><rect x="4.6" y="258.6" width="0.9" height="0.9" fill="#6c7684"/><rect x="4.6" y="262.8" width="0.9" height="0.9" fill="#6c7684"/><rect x="4.6" y="266.9" width="0.9" height="0.9" fill="#6c7684"/><rect x="4.6" y="275.1" width="0.9" height="0.9" fill="#6c7684"/><rect x="4.6" y="279.2" width="0.9" height="0.9" fill="#6c7684"/><rect x="4.6" y="283.4" width="0.9" height="0.9" fill="#6c7684"/><line x1="3" y1="287.9" x2="7" y2="287.9" stroke="#6c7684" stroke-width="0.7"/><rect x="4.6" y="291.6" width="0.9" height="0.9" fill="#6c7684"/></svg>
<div class="a" style="left:294px;top:112px;width:329px;height:185.5px;background:#fff;box-shadow:0 0 3.5px 1px rgba(70,75,85,.42),2px 2px 4px rgba(40,45,55,.28)"></div>
<div class="a" style="left:294px;top:112px;width:329px;height:185.5px;border:6px solid #f6f6f6"></div>
<div class="a" style="left:205px;top:93px;width:495px;height:250px;overflow:hidden"><svg class="a" style="left:89px;top:19px;overflow:visible" width="329" height="185" viewBox="0 0 329 185"><circle cx="52" cy="110" r="72.5" fill="#b1b649"/><circle cx="123" cy="40" r="72.5" fill="#f0ba30"/><circle cx="216.5" cy="66" r="72.5" fill="#1e88ad"/><circle cx="154" cy="156.5" r="72.5" fill="#b63367"/><circle cx="52" cy="110" r="72.5" fill="#8f8416" clip-path="url(#cY)"/><circle cx="216.5" cy="66" r="72.5" fill="#007a22" clip-path="url(#cY)"/><circle cx="154" cy="156.5" r="72.5" fill="#960010" clip-path="url(#cY)"/><circle cx="154" cy="156.5" r="72.5" fill="#5a0008" clip-path="url(#cO)"/><circle cx="154" cy="156.5" r="72.5" fill="#08064a" clip-path="url(#cB)"/><g clip-path="url(#cO)"><circle cx="154" cy="156.5" r="72.5" fill="#4a0004" clip-path="url(#cY)"/></g><g clip-path="url(#cB)"><circle cx="154" cy="156.5" r="72.5" fill="#000800" clip-path="url(#cY)"/></g><g font-size="33.5" font-weight="bold" font-family="'Liberation Sans',sans-serif"><text font-size="35" transform="translate(66.5,68.5) rotate(-14.85)" textLength="124" lengthAdjust="spacingAndGlyphs" fill="#fff" stroke="#fff" stroke-width="0.9" vector-effect="non-scaling-stroke">EXHIBITIONS</text><g clip-path="url(#cO)"><text font-size="35" transform="translate(66.5,68.5) rotate(-14.85)" textLength="124" lengthAdjust="spacingAndGlyphs" fill="#b1b649" stroke="#b1b649" stroke-width="1.4" vector-effect="non-scaling-stroke">EXHIBITIONS</text></g><g clip-path="url(#cB)"><text font-size="35" transform="translate(66.5,68.5) rotate(-14.85)" textLength="124" lengthAdjust="spacingAndGlyphs" fill="#2a90c0" stroke="#2a90c0" stroke-width="1.4" vector-effect="non-scaling-stroke">EXHIBITIONS</text></g><text font-size="35" transform="translate(179,87) rotate(-15.4)" textLength="103" lengthAdjust="spacingAndGlyphs" fill="#fff" stroke="#fff" stroke-width="0.9" vector-effect="non-scaling-stroke">INTERIORS</text><g clip-path="url(#cY)"><text font-size="35" transform="translate(179,87) rotate(-15.4)" textLength="103" lengthAdjust="spacingAndGlyphs" fill="#f0ba30" stroke="#f0ba30" stroke-width="1.4" vector-effect="non-scaling-stroke">INTERIORS</text></g><text font-size="35.5" transform="translate(46.9,124.7) rotate(-15.8)" textLength="70.5" lengthAdjust="spacingAndGlyphs" fill="#fff" stroke="#fff" stroke-width="0.9" vector-effect="non-scaling-stroke">EVENTS</text><g clip-path="url(#cY)"><text font-size="35.5" transform="translate(46.9,124.7) rotate(-15.8)" textLength="70.5" lengthAdjust="spacingAndGlyphs" fill="#f0ba30" stroke="#f0ba30" stroke-width="1.4" vector-effect="non-scaling-stroke">EVENTS</text></g><g clip-path="url(#cM)"><text font-size="35.5" transform="translate(46.9,124.7) rotate(-15.8)" textLength="70.5" lengthAdjust="spacingAndGlyphs" fill="#b63367" stroke="#b63367" stroke-width="1.4" vector-effect="non-scaling-stroke">EVENTS</text></g><g clip-path="url(#cM)"><g clip-path="url(#cY)"><text font-size="35.5" transform="translate(46.9,124.7) rotate(-15.8)" textLength="70.5" lengthAdjust="spacingAndGlyphs" fill="#960010" stroke="#960010" stroke-width="1.4" vector-effect="non-scaling-stroke">EVENTS</text></g></g><text font-size="35.5" transform="translate(145.3,171.6) rotate(-14.9)" textLength="75.2" lengthAdjust="spacingAndGlyphs" fill="#fff" stroke="#fff" stroke-width="0.9" vector-effect="non-scaling-stroke">DIGITAL</text><g clip-path="url(#cB)"><text font-size="35.5" transform="translate(145.3,171.6) rotate(-14.9)" textLength="75.2" lengthAdjust="spacingAndGlyphs" fill="#2a90c0" stroke="#2a90c0" stroke-width="1.4" vector-effect="non-scaling-stroke">DIGITAL</text></g></g><clipPath id="cU"><circle cx="123" cy="40" r="72.5" fill="#000"/><circle cx="52" cy="110" r="72.5" fill="#000"/><circle cx="216.5" cy="66" r="72.5" fill="#000"/><circle cx="154" cy="156.5" r="72.5" fill="#000"/></clipPath><g clip-path="url(#cU)"><path fill-rule="evenodd" d="M-100 -100H500V400H-100Z M0 0H329V185.5H0Z" fill="rgba(40,45,40,.055)"/><rect x="-1.2" y="-1.2" width="331.4" height="187.9" fill="none" stroke="rgba(30,30,30,.13)" stroke-width="2.4"/><rect x="329" y="1" width="3.5" height="187" fill="rgba(30,30,30,.1)"/><rect x="1" y="185.5" width="331" height="3.5" fill="rgba(30,30,30,.1)"/></g></svg></div>
<div class="t" style="left:585.0px;top:291.1px;line-height:4px;font-size:2.9px;color:#4a4a4a;transform:scaleX(0.954);">© ACTION IMPACT 2014</div>
<div class="a" style="left:695.5px;top:93px;width:4.5px;height:249px;background:#d6dae0"></div>
<div class="a" style="left:695.5px;top:104.6px;width:6px;height:11.6px;background:#f4f6f8;border:1px solid #8f98a4;border-radius:1.5px"></div>
<div class="a" style="left:698.3px;top:108px;width:2px;height:5px;background:#7c8593"></div>
<div class="a" style="left:696.5px;top:301px;width:0;height:0;border:2px solid transparent;border-top:2.5px solid #4a5260"></div>
<div class="a" style="left:697.5px;top:316px;width:2.5px;height:1.2px;background:#4a5260"></div>
<div class="a" style="left:697.5px;top:320px;width:2.5px;height:1.2px;background:#4a5260"></div>
<div class="a" style="left:697.5px;top:327px;width:2.5px;height:1.2px;background:#4a5260"></div>
<div class="a" style="left:697.5px;top:331px;width:2.5px;height:1.2px;background:#4a5260"></div>
<div class="a" style="left:203px;top:342px;width:497px;height:4px;background:linear-gradient(#d9dde2,#e6e9ed);border-top:1px solid #a2a9b3"></div>
<div class="a" style="left:203.5px;top:346px;width:496.5px;height:60px;background:#fff;border-top:1px solid #9aa2ad;border-left:1px solid #9aa2ad"></div>
<div class="t" style="left:208.7px;top:349.4px;line-height:10px;font-size:7.6px;color:#111;transform:scaleX(0.823);font-weight:bold;font-family:'DejaVu Sans',sans-serif;">SLIDE:  Our core disciplines:  [Image:  4 circles] [Interactivity: hyperlinks  for details for each discipline  or run linear] – NOT  ACTIVE,</div>
<div class="t" style="left:208.7px;top:357.8px;line-height:10px;font-size:7.6px;color:#111;transform:scaleX(0.838);font-weight:bold;font-family:'DejaVu Sans',sans-serif;">YET</div>
<div class="t" style="left:208.7px;top:375.1px;line-height:10px;font-size:7.6px;color:#111;transform:scaleX(0.856);font-weight:bold;font-family:'DejaVu Sans',sans-serif;">Slide copy/Content:</div>
<div class="t" style="left:209.0px;top:383.3px;line-height:11px;font-size:9px;color:#111;transform:scaleX(0.622);font-family:'DejaVu Sans',sans-serif;">•</div>
<div class="t" style="left:217.0px;top:384.1px;line-height:9px;font-size:7.4px;color:#222;transform:scaleX(0.798);font-family:'DejaVu Sans',sans-serif;">Events</div>
<div class="t" style="left:209.0px;top:391.8px;line-height:11px;font-size:9px;color:#111;transform:scaleX(0.622);font-family:'DejaVu Sans',sans-serif;">•</div>
<div class="t" style="left:217.0px;top:392.6px;line-height:9px;font-size:7.4px;color:#222;transform:scaleX(0.813);font-family:'DejaVu Sans',sans-serif;">Exhibitions</div>
<div class="t" style="left:209.0px;top:400.4px;line-height:11px;font-size:9px;color:#111;transform:scaleX(0.622);font-family:'DejaVu Sans',sans-serif;">•</div>
<div class="t" style="left:217.0px;top:401.2px;line-height:9px;font-size:7.4px;color:#222;transform:scaleX(0.843);font-family:'DejaVu Sans',sans-serif;">Interiors</div>
<div class="a" style="left:695.5px;top:346.5px;width:5px;height:59px;background:#e4e7ec;border-left:1px solid #aeb5bf"></div>
<div class="a" style="left:696.5px;top:365px;width:4px;height:9px;background:#f4f6f8;border:1px solid #9aa3ae"></div>
<div class="a" style="left:696px;top:351px;width:0;height:0;border:2.2px solid transparent;border-bottom:2.6px solid #4a5260"></div>
<div class="a" style="left:696px;top:398px;width:0;height:0;border:2.2px solid transparent;border-top:2.6px solid #4a5260"></div>
<div class="a" style="left:0px;top:406px;width:700px;height:17px;background:linear-gradient(#e4e9ef,#d5dbe3);border-top:1px solid #a4adb8"></div>
<div class="a" style="left:3px;top:420.5px;width:697px;height:2.5px;background:#1a1a1a"></div>
<div class="t" style="left:7.7px;top:409.6px;line-height:10px;font-size:8.2px;color:#3b4452;transform:scaleX(0.863);">Slide 13 of 95</div>
<div class="t" style="left:61.7px;top:409.6px;line-height:10px;font-size:8.2px;color:#3b4452;transform:scaleX(0.870);">"Action Impact Theme"</div>
<div class="a" style="left:56.5px;top:408px;width:1px;height:12px;background:#b3bbc6;box-shadow:1px 0 0 #f1f3f6"></div>
<div class="a" style="left:138.7px;top:408px;width:1px;height:12px;background:#b3bbc6;box-shadow:1px 0 0 #f1f3f6"></div>
<div class="a" style="left:161px;top:408px;width:1px;height:12px;background:#b3bbc6;box-shadow:1px 0 0 #f1f3f6"></div>
<svg class="a" style="left:144px;top:408px" width="13" height="11" viewBox="0 0 13 11"><path d="M1 6.5L5 4L11 6L7 9Z" fill="#dfe7f2" stroke="#4c6fa8" stroke-width="0.8"/><path d="M1 6.5V8L7 10.5V9Z" fill="#5d86c4"/><path d="M7 9V10.5L11 7.5V6Z" fill="#3e68aa"/><path d="M6 1L11 6M11 1L6 6" stroke="#d63b2f" stroke-width="1.4"/></svg>
<div class="a" style="left:525px;top:407.7px;width:11.6px;height:11.7px;background:linear-gradient(#fde9a6,#f9cc55);border:1px solid #d9a83a;border-radius:1.5px"></div>
<svg class="a" style="left:527px;top:410px" width="8" height="7" viewBox="0 0 8 7"><rect x="0.4" y="0.4" width="7.2" height="6.2" fill="#fff" stroke="#5c6675" stroke-width="0.8"/><rect x="0.4" y="0.4" width="2.2" height="6.2" fill="#8b95a4"/><rect x="3.5" y="1.8" width="3" height="2.4" fill="#6d7888"/></svg>
<svg class="a" style="left:539px;top:409.5px" width="9" height="8" viewBox="0 0 9 8"><g fill="#fff" stroke="#5c6675" stroke-width="0.7"><rect x="0.5" y="0.5" width="3.2" height="2.6"/><rect x="5" y="0.5" width="3.2" height="2.6"/><rect x="0.5" y="4.6" width="3.2" height="2.6"/><rect x="5" y="4.6" width="3.2" height="2.6"/></g></svg>
<svg class="a" style="left:551px;top:409.5px" width="9" height="8" viewBox="0 0 9 8"><path d="M0.5 1Q2.5 0 4.5 1Q6.5 0 8.5 1V7Q6.5 6 4.5 7Q2.5 6 0.5 7Z" fill="#f6f7f9" stroke="#5c6675" stroke-width="0.7"/><line x1="4.5" y1="1" x2="4.5" y2="7" stroke="#5c6675" stroke-width="0.6"/></svg>
<svg class="a" style="left:564px;top:409.5px" width="9" height="8.5" viewBox="0 0 9 8.5"><rect x="0" y="0" width="9" height="1.2" fill="#5c6675"/><rect x="1" y="1.2" width="7" height="4" fill="#f6f7f9" stroke="#5c6675" stroke-width="0.7"/><rect x="4" y="5.2" width="1" height="2" fill="#5c6675"/><rect x="2.5" y="7.2" width="4" height="1" fill="#5c6675"/></svg>
<div class="t" style="left:580.0px;top:409.6px;line-height:10px;font-size:8px;color:#3b4452;transform:scaleX(0.812);">50%</div>
<svg class="a" style="left:598.4px;top:408.8px" width="10" height="10" viewBox="0 0 10 10"><circle cx="5" cy="5" r="4.3" fill="#f5f7f9" stroke="#7a8493" stroke-width="0.9"/><path d="M2.8 5H7.2" stroke="#4f5968" stroke-width="1"/></svg>
<svg class="a" style="left:677.3px;top:408.8px" width="10" height="10" viewBox="0 0 10 10"><circle cx="5" cy="5" r="4.3" fill="#f5f7f9" stroke="#7a8493" stroke-width="0.9"/><path d="M2.8 5H7.2M5 2.8V7.2" stroke="#4f5968" stroke-width="1"/></svg>
<div class="a" style="left:610px;top:413.5px;width:66px;height:1px;background:#8e97a4;box-shadow:0 1px 0 #f3f5f8"></div>
<div class="a" style="left:643px;top:411px;width:1px;height:6px;background:#8e97a4"></div>
<svg class="a" style="left:622.5px;top:408.5px" width="7" height="10" viewBox="0 0 7 10"><path d="M0.5 0.5H6.5V6L3.5 9.5L0.5 6Z" fill="#f1f3f6" stroke="#6f7a89" stroke-width="0.9"/></svg>
<div class="a" style="left:692px;top:408.5px;width:9px;height:11px;background:#eef1f4;border:1px solid #7a8493"></div>
<svg class="a" style="left:693.5px;top:410.5px" width="6" height="7" viewBox="0 0 6 7"><path d="M0.5 2.5V0.5H2.5M3.5 0.5H5.5V2.5M5.5 4.5V6.5H3.5M2.5 6.5H0.5V4.5" stroke="#3f4856" stroke-width="0.9" fill="none"/></svg>
<div class="a" style="left:126px;top:80.5px;width:90px;height:15px;background:linear-gradient(90deg,#fdf2c4,#fce9a4 45%,#fbe28e);border:1px solid #efd27c;border-radius:2px;box-shadow:1px 1px 2px rgba(0,0,0,.25)"></div>
<svg class="a" style="left:130px;top:83px" width="11" height="10" viewBox="0 0 11 10"><rect x="0.3" y="0.3" width="3.6" height="2" fill="#5d9be0" stroke="#3c73b8" stroke-width="0.5"/><rect x="0.3" y="3.3" width="3.6" height="2" fill="#dfe9f6" stroke="#8aa4c8" stroke-width="0.5"/><rect x="0.3" y="6.3" width="3.6" height="2" fill="#5d9be0" stroke="#3c73b8" stroke-width="0.5"/><rect x="2.5" y="2.2" width="8" height="1.2" fill="#6f7f93"/><rect x="3.3" y="3.4" width="6.4" height="4" fill="#f2f5f9" stroke="#8393a8" stroke-width="0.7"/><rect x="6" y="7.4" width="1" height="1.6" fill="#7c8a9c"/><rect x="4.3" y="9" width="4.4" height="1" fill="#7c8a9c"/></svg>
<div class="t" style="left:147.5px;top:83.7px;line-height:10px;font-size:8.2px;color:#3b4452;transform:scaleX(0.831)">Custom Sho<span style="text-decoration:underline">w</span>s...</div>
<div class="a" style="left:161px;top:97.5px;width:89.5px;height:13.5px;background:linear-gradient(#ffffff,#e9edf4);border:1px solid #8d96a3;border-radius:2px;box-shadow:1px 1px 2px rgba(0,0,0,.3)"></div>
<div class="t" style="left:165.0px;top:100.1px;line-height:10px;font-size:8.2px;color:#4a4f58;transform:scaleX(0.840);">Custom Slide Show Dialog</div>
</div></body></html>
